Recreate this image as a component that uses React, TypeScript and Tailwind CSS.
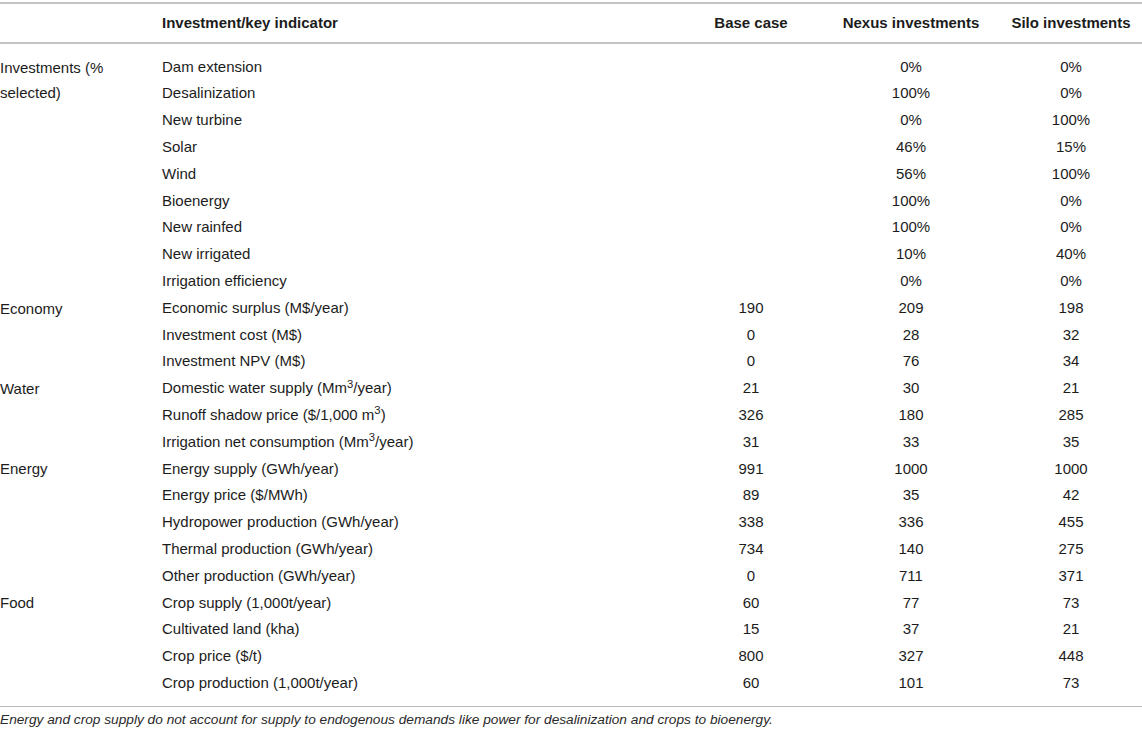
const groups = [
  {
    name: "Investments (% selected)",
    rows: [
      ["Dam extension", "", "0%", "0%"],
      ["Desalinization", "", "100%", "0%"],
      ["New turbine", "", "0%", "100%"],
      ["Solar", "", "46%", "15%"],
      ["Wind", "", "56%", "100%"],
      ["Bioenergy", "", "100%", "0%"],
      ["New rainfed", "", "100%", "0%"],
      ["New irrigated", "", "10%", "40%"],
      ["Irrigation efficiency", "", "0%", "0%"],
    ],
  },
  {
    name: "Economy",
    rows: [
      ["Economic surplus (M$/year)", "190", "209", "198"],
      ["Investment cost (M$)", "0", "28", "32"],
      ["Investment NPV (M$)", "0", "76", "34"],
    ],
  },
  {
    name: "Water",
    rows: [
      ["Domestic water supply (Mm3/year)", "21", "30", "21"],
      ["Runoff shadow price ($/1,000 m3)", "326", "180", "285"],
      ["Irrigation net consumption (Mm3/year)", "31", "33", "35"],
    ],
  },
  {
    name: "Energy",
    rows: [
      ["Energy supply (GWh/year)", "991", "1000", "1000"],
      ["Energy price ($/MWh)", "89", "35", "42"],
      ["Hydropower production (GWh/year)", "338", "336", "455"],
      ["Thermal production (GWh/year)", "734", "140", "275"],
      ["Other production (GWh/year)", "0", "711", "371"],
    ],
  },
  {
    name: "Food",
    rows: [
      ["Crop supply (1,000t/year)", "60", "77", "73"],
      ["Cultivated land (kha)", "15", "37", "21"],
      ["Crop price ($/t)", "800", "327", "448"],
      ["Crop production (1,000t/year)", "60", "101", "73"],
    ],
  },
];

const spans: Record<number, string> = {
  9: "row-span-9",
  3: "row-span-3",
  5: "row-span-5",
  4: "row-span-4",
};

// "m3" / "Mm3" -> superscript 3
const Label = ({ text }: { text: string }) => {
  const parts = text.split(/(m3)/);
  return (
    <span className="whitespace-pre">
      {parts.map((p, i) =>
        p === "m3" ? (
          <span key={i}>
            m<sup>3</sup>
          </span>
        ) : (
          <span key={i}>{p}</span>
        )
      )}
    </span>
  );
};

const cols = "grid grid-cols-[162px_528px_122px_198px_122px]";

export default function App() {
  return (
    <div className="w-[1142px] h-[732px] bg-white text-[#1c1c1c] text-[15px] font-['Liberation_Sans',Arial,sans-serif] overflow-hidden">
      <div className="mt-[2px] border-t-2 border-b-2 border-[#c4c4c4]">
        <div className={`${cols} h-[38px] items-center font-bold`}>
          <div />
          <div>Investment/key indicator</div>
          <div className="text-center">Base case</div>
          <div className="text-center">Nexus investments</div>
          <div className="text-center">Silo investments</div>
        </div>
      </div>

      <div className={`${cols} auto-rows-[26.8px] pt-[9.5px] pb-[9px] border-b border-[#b8b8b8]`}>
        {groups.map((g) => (
          <div key={g.name} className="contents">
            <div className={`${spans[g.rows.length]} col-start-1 pr-3 leading-[25px] pt-[1px]`}>{g.name}</div>
            {g.rows.map((r) => (
              <div key={r[0]} className="contents">
                <div className="col-start-2 flex items-center">
                  <Label text={r[0]} />
                </div>
                <div className="flex items-center justify-center">{r[1]}</div>
                <div className="flex items-center justify-center">{r[2]}</div>
                <div className="flex items-center justify-center">{r[3]}</div>
              </div>
            ))}
          </div>
        ))}
      </div>

      <p className="italic text-[13.7px] text-[#2a2a2a] pt-[3px]">
        Energy and crop supply do not account for supply to endogenous demands like power for desalinization and crops to bioenergy.
      </p>
    </div>
  );
}
